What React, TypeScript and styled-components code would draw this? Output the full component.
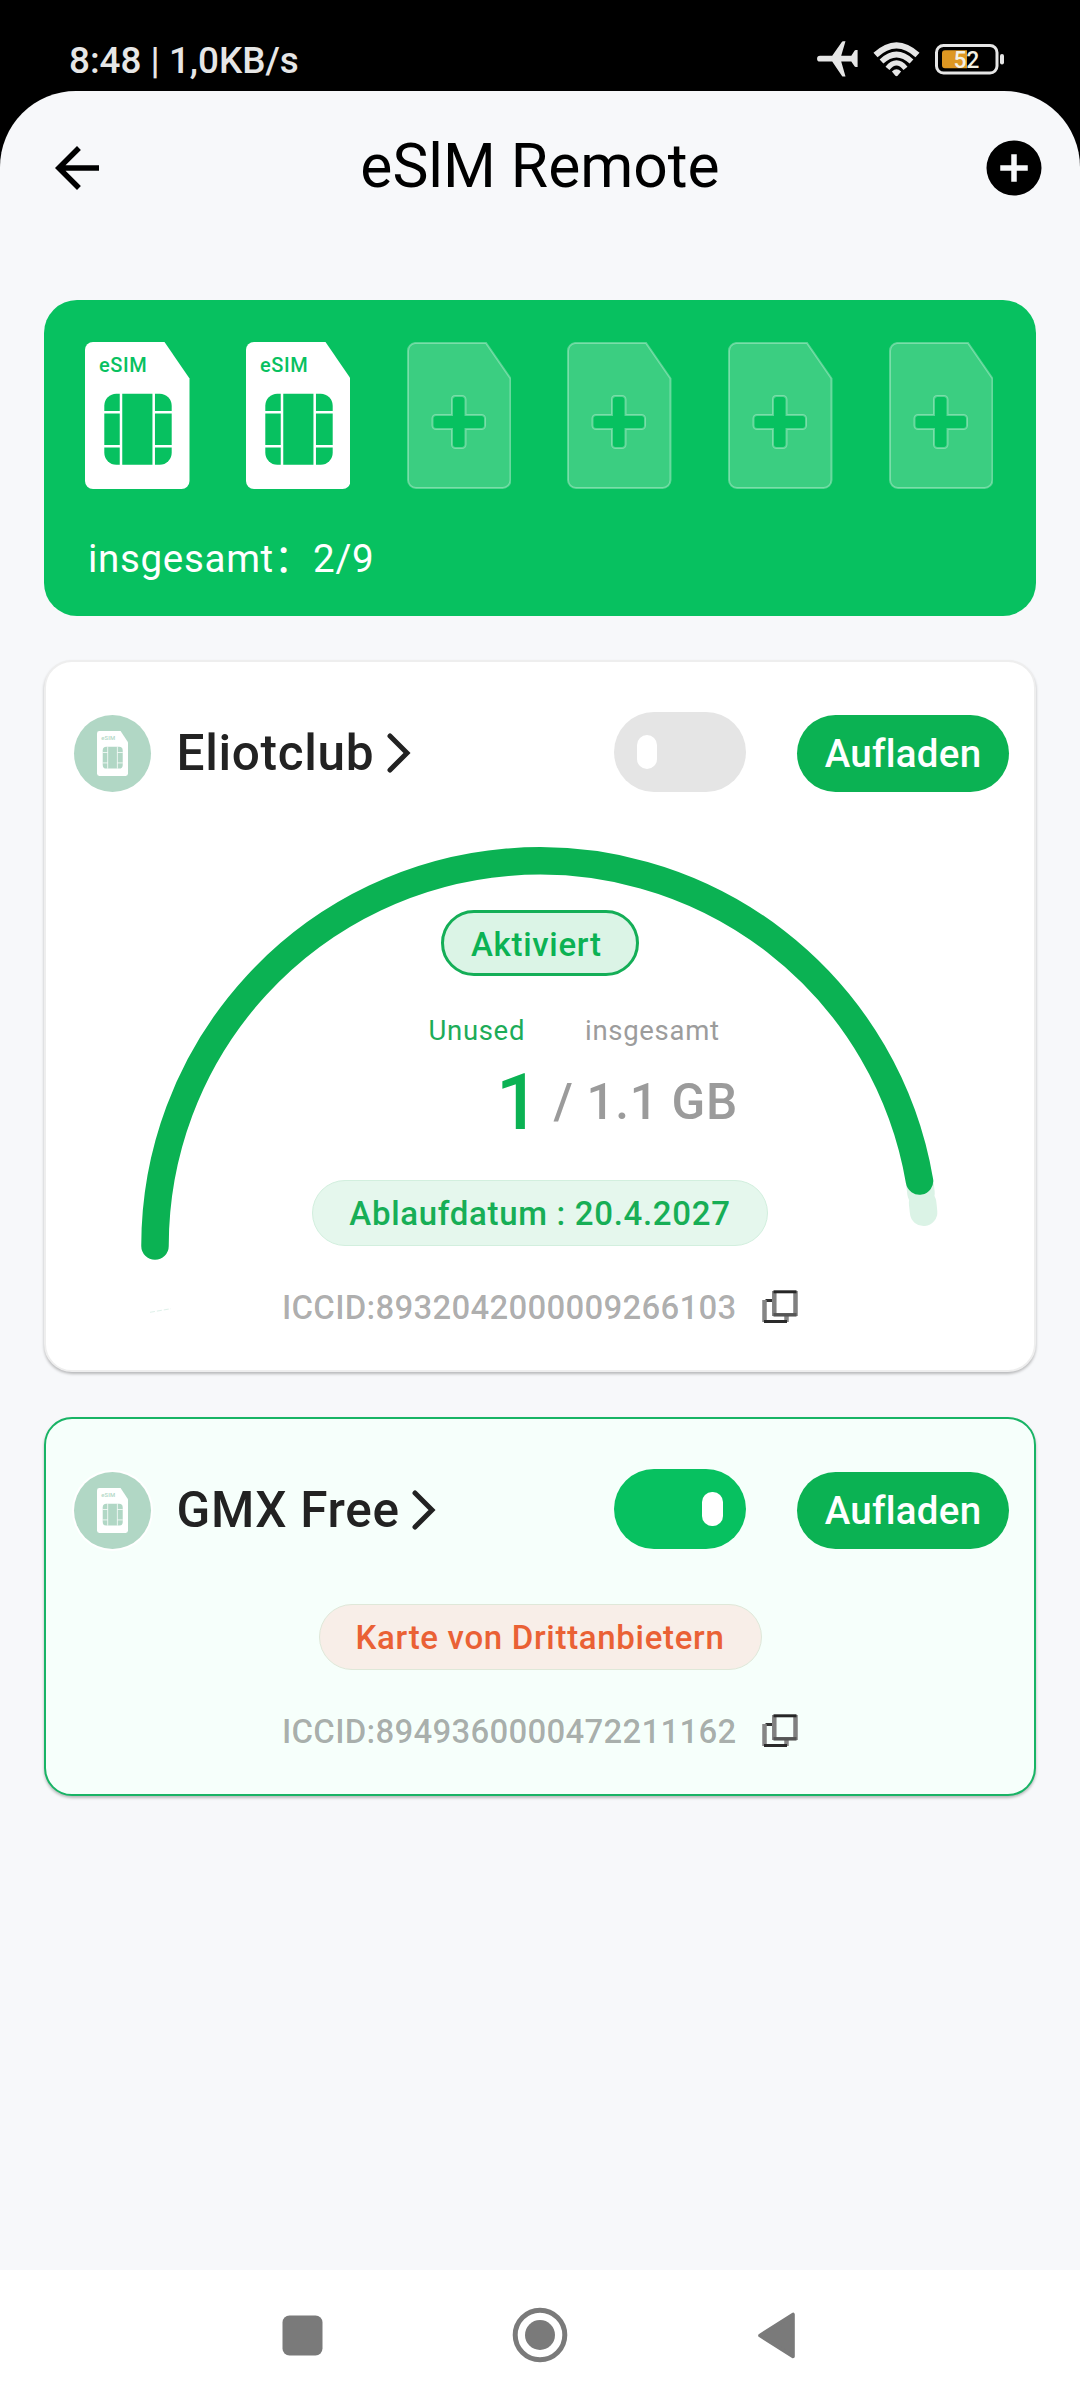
import React from "react";
import styled, { createGlobalStyle } from "styled-components";

const BRAND = "#07c160";
const ACCENT = "#0bb253";

const GlobalStyle = createGlobalStyle`
  * { box-sizing: border-box; }
  body { margin: 0; background: #000; }
`;

const Screen = styled.div`
  width: 1080px;
  height: 2400px;
  display: flex;
  flex-direction: column;
  background: #000;
  font-family: Roboto, "Noto Sans CJK SC", sans-serif;
  letter-spacing: 0.6875px;
`;

const StatusBar = styled.header`
  height: 91px;
  padding: 36px 75px 0 69px;
  display: flex;
  justify-content: space-between;
  color: #e6e6e6;
  letter-spacing: 0;
`;

const StatusText = styled.span`
  font-size: 36.8px;
  line-height: 49px;
  font-weight: 500;
`;

const StatusIcons = styled.div`
  display: flex;
  align-items: flex-start;
  gap: 15px;
  padding-top: 5px;
`;

const Page = styled.main`
  flex: 1;
  display: flex;
  flex-direction: column;
  padding: 0 44px;
  background: #f7f8fa;
  border-radius: 76px 76px 0 0;
`;

const AppBar = styled.div`
  height: 209px;
  margin: 0 -11px 0 0;
  padding-top: 44px;
  display: flex;
  align-items: flex-start;
  justify-content: space-between;
`;

const Title = styled.h1`
  margin: 0 0 0 -11px;
  font-size: 60.5px;
  line-height: 64px;
  font-weight: 400;
  letter-spacing: 0;
  color: #000;
`;

const IconButton = styled.button`
  display: flex;
  padding: 0;
  border: 0;
  background: none;
  color: #000;
`;

const SlotPanel = styled.section`
  height: 316px;
  padding: 42px 42.5px 0 41px;
  border-radius: 33px;
  background: ${BRAND};
`;

const SlotRow = styled.div`
  display: flex;
  justify-content: space-between;
`;

const SlotCount = styled.div`
  margin: 46px 0 0 3px;
  font-size: 38.5px;
  line-height: 48px;
  color: #fff;
`;

const Card = styled.section<{ $active?: boolean; $height: number }>`
  height: ${(p) => p.$height}px;
  padding-top: 50px;
  border: 2px solid ${(p) => (p.$active ? "#18b465" : "#eeeeee")};
  border-radius: 28px;
  background: ${(p) => (p.$active ? "#f6fffb" : "#fff")};
  box-shadow: 0 2px 3px rgba(0, 0, 0, 0.26);
`;

const CardList = styled.div`
  display: flex;
  flex-direction: column;
  gap: 45px;
  margin-top: 44px;
`;

const CardHead = styled.div`
  height: 80px;
  display: flex;
  align-items: flex-end;
  padding: 0 25px 0 28px;
`;

const Avatar = styled.div<{ $ring?: boolean }>`
  width: 77px;
  height: 77px;
  display: flex;
  align-items: center;
  justify-content: center;
  border-radius: 50%;
  background: #b1d7c5;
  box-shadow: ${(p) => (p.$ring ? "0 0 0 2px #fff" : "none")};
`;

const Name = styled.h2`
  margin: 0 12.5px 0 25.5px;
  font-size: 49.5px;
  line-height: 78px;
  font-weight: 500;
  color: #222;
`;

const Chevron = styled.svg`
  margin-bottom: 19px;
`;

const Toggle = styled.div<{ $on?: boolean }>`
  width: 132px;
  height: 80px;
  margin: 0 51.5px 0 auto;
  padding: 0 23px;
  display: flex;
  align-items: center;
  justify-content: ${(p) => (p.$on ? "flex-end" : "flex-start")};
  border-radius: 40px;
  background: ${(p) => (p.$on ? BRAND : "#e5e5e5")};
`;

const Thumb = styled.span`
  width: 20.5px;
  height: 34px;
  border-radius: 10px;
  background: #fff;
`;

const ChargeButton = styled.button`
  width: 212px;
  height: 77px;
  padding: 0;
  border: 0;
  border-radius: 39px;
  background: ${ACCENT};
  color: #fff;
  font: 500 38.5px/77px Roboto, sans-serif;
  letter-spacing: 0.25px;
`;

const Usage = styled.div`
  display: grid;
  height: 576px;

  > * { grid-area: 1 / 1; }
`;

const UsageInfo = styled.div`
  display: flex;
  flex-direction: column;
  padding-top: 118px;
`;

const StatusPill = styled.div`
  width: 198px;
  height: 66px;
  margin-left: 395px;
  padding-left: 27px;
  border: 3px solid #14ae57;
  border-radius: 33px;
  background: #dbf4e6;
  font-size: 33px;
  line-height: 63px;
  font-weight: 500;
  color: ${ACCENT};
`;

const LabelRow = styled.div`
  display: flex;
  gap: 60px;
  margin-top: 39px;
  padding-left: 382.5px;
  font-size: 27.5px;
  line-height: 32px;
  color: #9c9c9c;
`;

const UnusedLabel = styled.span`
  color: #1dac58;
`;

const AmountRow = styled.div`
  display: flex;
  align-items: flex-start;
  margin-top: 11px;
  padding-left: 450px;
  font-weight: 500;
`;

const Remaining = styled.span`
  font-size: 77px;
  line-height: 90px;
  color: ${ACCENT};
`;

const Total = styled.span`
  padding-top: 15px;
  font-size: 49.5px;
  line-height: 58px;
  white-space: pre;
  color: #9b9b9b;
`;

const InfoPill = styled.div<{ $warn?: boolean; $top: number }>`
  height: 66px;
  margin: ${(p) => p.$top}px auto 0;
  padding: 0 36px;
  border: 1px solid ${(p) => (p.$warn ? "#dfe8d9" : "#d2efde")};
  border-radius: 33px;
  background: ${(p) => (p.$warn ? "#f8eee8" : "#e5f7ed")};
  font-size: 33px;
  line-height: 66px;
  font-weight: 500;
  color: ${(p) => (p.$warn ? "#ea6135" : "#17ae56")};
`;

const Center = styled.div`
  display: flex;
`;

const IccidRow = styled.div`
  display: flex;
  align-items: flex-start;
  justify-content: space-between;
  width: 516px;
  margin: 42px 0 0 236px;
  font-size: 33px;
  line-height: 40px;
  font-weight: 500;
  letter-spacing: 0.24px;
  color: rgba(0, 0, 0, 0.32);
`;

const NavBar = styled.nav`
  height: 130px;
  display: flex;
  align-items: center;
  justify-content: space-between;
  padding: 0 284px 0 282px;
  background: #fff;
`;

const SIM_OUTLINE =
  "M8 1H79L103.5 36.5V138a8 8 0 0 1-8 8H9a8 8 0 0 1-8-8V9a8 8 0 0 1 7-8Z";

function SimCard({ width = 104.5, height = 147, ink = BRAND }) {
  return (
    <svg width={width} height={height} viewBox="0 0 104.5 147" preserveAspectRatio="none">
      <path
        d="M8 0H79.5L104.5 36.5V139a8 8 0 0 1-8 8H8a8 8 0 0 1-8-8V8a8 8 0 0 1 8-8Z"
        fill="#fff"
      />
      <text x="14" y="29.7" fontSize="20" fontWeight="500" letterSpacing="0.6" fill={ink}>
        eSIM
      </text>
      <rect x="19.3" y="51.7" width="67.4" height="71" rx="12" fill={ink} />
      <path
        d="M36 51V123M68.7 51V123M19 70.2H36M19 104.2H36M68.7 70.2H87M68.7 104.2H87"
        stroke="#fff"
        strokeWidth="2.5"
        fill="none"
      />
    </svg>
  );
}

function EmptySlot() {
  return (
    <svg width="104.5" height="147" viewBox="0 0 104.5 147">
      <path
        fillRule="evenodd"
        fill="#fff"
        fillOpacity="0.21"
        stroke="#fff"
        strokeOpacity="0.32"
        strokeWidth="2"
        d={
          SIM_OUTLINE +
          "M48.300 54H55a3.500 3.500 0 0 1 3.500 3.500V73H74.500a3.500 3.500 0 0 1 3.500 3.500V83.500a3.500 3.500 0 0 1-3.500 3.500H58.500V102.500a3.500 3.500 0 0 1-3.500 3.500H48.500a3.500 3.500 0 0 1-3.500-3.500V87H29a3.500 3.500 0 0 1-3.500-3.500V76.500a3.500 3.500 0 0 1 3.500-3.500H45V57.500a3.500 3.500 0 0 1 3.300-3.500Z"
        }
      />
    </svg>
  );
}

function CopyIcon() {
  return (
    <svg width="36" height="36" viewBox="0 0 36 36" fill="none">
      <path d="M10 12.500H3.500" stroke="#333" strokeWidth="3" />
      <path d="M2.500 12V34M24.500 28V34" stroke="#858585" strokeWidth="4.500" />
      <path d="M2 33.500H25" stroke="#2a2a2a" strokeWidth="3" />
      <path d="M12.300 3V28M33.500 3V28" stroke="#808080" strokeWidth="4.500" />
      <path d="M11.500 3.800H34.500" stroke="#262626" strokeWidth="3" />
      <path d="M11.500 26.800H34.500" stroke="#555" strokeWidth="3.500" />
    </svg>
  );
}

function Gauge() {
  return (
    <svg width="988" height="576" viewBox="46 792 988 576" fill="none" strokeLinecap="round" strokeWidth="27.5">
      <path d="M919.500 1181A385 385 0 0 1 921 1193" stroke="#dbf3e6" />
      <path d="M922.600 1203A385 385 0 0 1 923.600 1212.300" stroke="#dbf3e6" />
      <path d="M155 1246A385 385 0 0 1 919.500 1181" stroke={ACCENT} />
      <path d="M150 1312.300L171 1308.700" stroke="#dff1ea" strokeWidth="1" strokeLinecap="butt" strokeDasharray="5 2" />
    </svg>
  );
}

function PlaneIcon() {
  return (
    <svg width="41" height="36" viewBox="0 0 41 36" fill="currentColor">
      <path d="M3 14.700H15.200L25 .8Q25.400 .3 26 .3H28.500L24.200 14.700H34.300L37.500 9.800Q38 9 38.800 9H40.600V26H38.800Q38 26 37.500 25.200L34.300 20.600H24.200L28.500 35.400H26Q25.400 35.400 25 34.900L15.200 20.600H3A2.950 2.950 0 0 1 3 14.700Z" />
    </svg>
  );
}

const OffsetWifi = styled.svg`
  margin-top: 1px;
`;

function WifiIcon() {
  return (
    <OffsetWifi width="47" height="36" viewBox="0 0 47 36" fill="none" stroke="currentColor">
      <path d="M2.500 13Q23.500-6.400 44.500 13" strokeWidth="6" />
      <path d="M8.500 19.500Q23.500 5.500 38.500 19.500" strokeWidth="5.500" />
      <path d="M14.500 26.300Q23.500 15.500 32.500 26.300" strokeWidth="5.200" />
      <path d="M18.900 29.600Q23.500 24.800 28.100 29.600L24.600 33.700Q23.500 34.600 22.400 33.700Z" fill="currentColor" stroke="none" />
    </OffsetWifi>
  );
}

const OffsetBattery = styled.svg`
  margin-top: 2.7px;
`;

function BatteryIcon() {
  return (
    <OffsetBattery width="70" height="31" viewBox="0 0 70 31">
      <rect x="1.500" y="1.500" width="60.500" height="27.500" rx="7" fill="none" stroke="currentColor" strokeWidth="3" />
      <rect x="65" y="10" width="4" height="10.500" rx="2" fill="currentColor" />
      <path d="M10 6.300H32V24.300H10A3 3 0 0 1 7 21.300V9.300A3 3 0 0 1 10 6.300Z" fill="#dd9722" />
      <text x="18.500" y="24.200" fontSize="23" fontWeight="500" letterSpacing="-0.400" fill="#f2f0e4">
        52
      </text>
    </OffsetBattery>
  );
}

function ProfileHead({ name, on }: { name: string; on?: boolean }) {
  return (
    <CardHead>
      <Avatar $ring={on}>
        <SimCard width={31} height={45} ink="#b1d7c5" />
      </Avatar>
      <Name>{name}</Name>
      <Chevron width="24" height="40" viewBox="0 0 24 40" fill="none">
        <path d="M3 3L20 20L3 37" stroke="#222" strokeWidth="5" strokeLinecap="round" />
      </Chevron>
      <Toggle $on={on}>
        <Thumb />
      </Toggle>
      <ChargeButton>Aufladen</ChargeButton>
    </CardHead>
  );
}

function Iccid({ value }: { value: string }) {
  return (
    <IccidRow>
      <span>ICCID:{value}</span>
      <CopyIcon />
    </IccidRow>
  );
}

export default function App() {
  return (
    <Screen>
      <GlobalStyle />
      <StatusBar>
        <StatusText>8:48 | 1,0KB/s</StatusText>
        <StatusIcons>
          <PlaneIcon />
          <WifiIcon />
          <BatteryIcon />
        </StatusIcons>
      </StatusBar>
      <Page>
        <AppBar>
          <IconButton>
            <svg width="66" height="66" viewBox="0 0 24 24" fill="currentColor">
              <path d="M20 11H7.830l5.590-5.590L12 4l-8 8 8 8 1.410-1.410L7.830 13H20v-2z" />
            </svg>
          </IconButton>
          <Title>eSlM Remote</Title>
          <IconButton>
            <svg width="66" height="66" viewBox="0 0 24 24" fill="currentColor">
              <path d="M12 2a10 10 0 1 0 0 20 10 10 0 0 0 0-20zm5 11h-4v4h-2v-4H7v-2h4V7h2v4h4v2z" />
            </svg>
          </IconButton>
        </AppBar>

        <SlotPanel>
          <SlotRow>
            <SimCard />
            <SimCard />
            <EmptySlot />
            <EmptySlot />
            <EmptySlot />
            <EmptySlot />
          </SlotRow>
          <SlotCount>insgesamt：2/9</SlotCount>
        </SlotPanel>

        <CardList>
          <Card $height={712}>
            <ProfileHead name="Eliotclub" />
            <Usage>
              <Gauge />
              <UsageInfo>
                <StatusPill>Aktiviert</StatusPill>
                <LabelRow>
                  <UnusedLabel>Unused</UnusedLabel>
                  <span>insgesamt</span>
                </LabelRow>
                <AmountRow>
                  <Remaining>1</Remaining>
                  <Total> / 1.1 GB</Total>
                </AmountRow>
                <Center>
                  <InfoPill $top={32}>Ablaufdatum : 20.4.2027</InfoPill>
                </Center>
                <Iccid value="8932042000009266103" />
              </UsageInfo>
            </Usage>
          </Card>

          <Card $active $height={379}>
            <ProfileHead name="GMX Free" on />
            <Center>
              <InfoPill $warn $top={55}>
                Karte von Drittanbietern
              </InfoPill>
            </Center>
            <Iccid value="8949360000472211162" />
          </Card>
        </CardList>
      </Page>
      <NavBar>
        <svg width="41" height="41" viewBox="0 0 41 41">
          <rect x="0.500" y="0.500" width="40" height="40" rx="7" fill="#7a7a7a" />
        </svg>
        <svg width="56" height="56" viewBox="0 0 56 56">
          <circle cx="28" cy="28" r="24.800" fill="none" stroke="#7a7a7a" strokeWidth="5" />
          <circle cx="28" cy="28" r="15" fill="#7a7a7a" />
        </svg>
        <svg width="39" height="47" viewBox="0 0 39 47">
          <path d="M3 23.500L36 2.500V44.500Z" fill="#7a7a7a" stroke="#7a7a7a" strokeWidth="3.600" strokeLinejoin="round" />
        </svg>
      </NavBar>
    </Screen>
  );
}
